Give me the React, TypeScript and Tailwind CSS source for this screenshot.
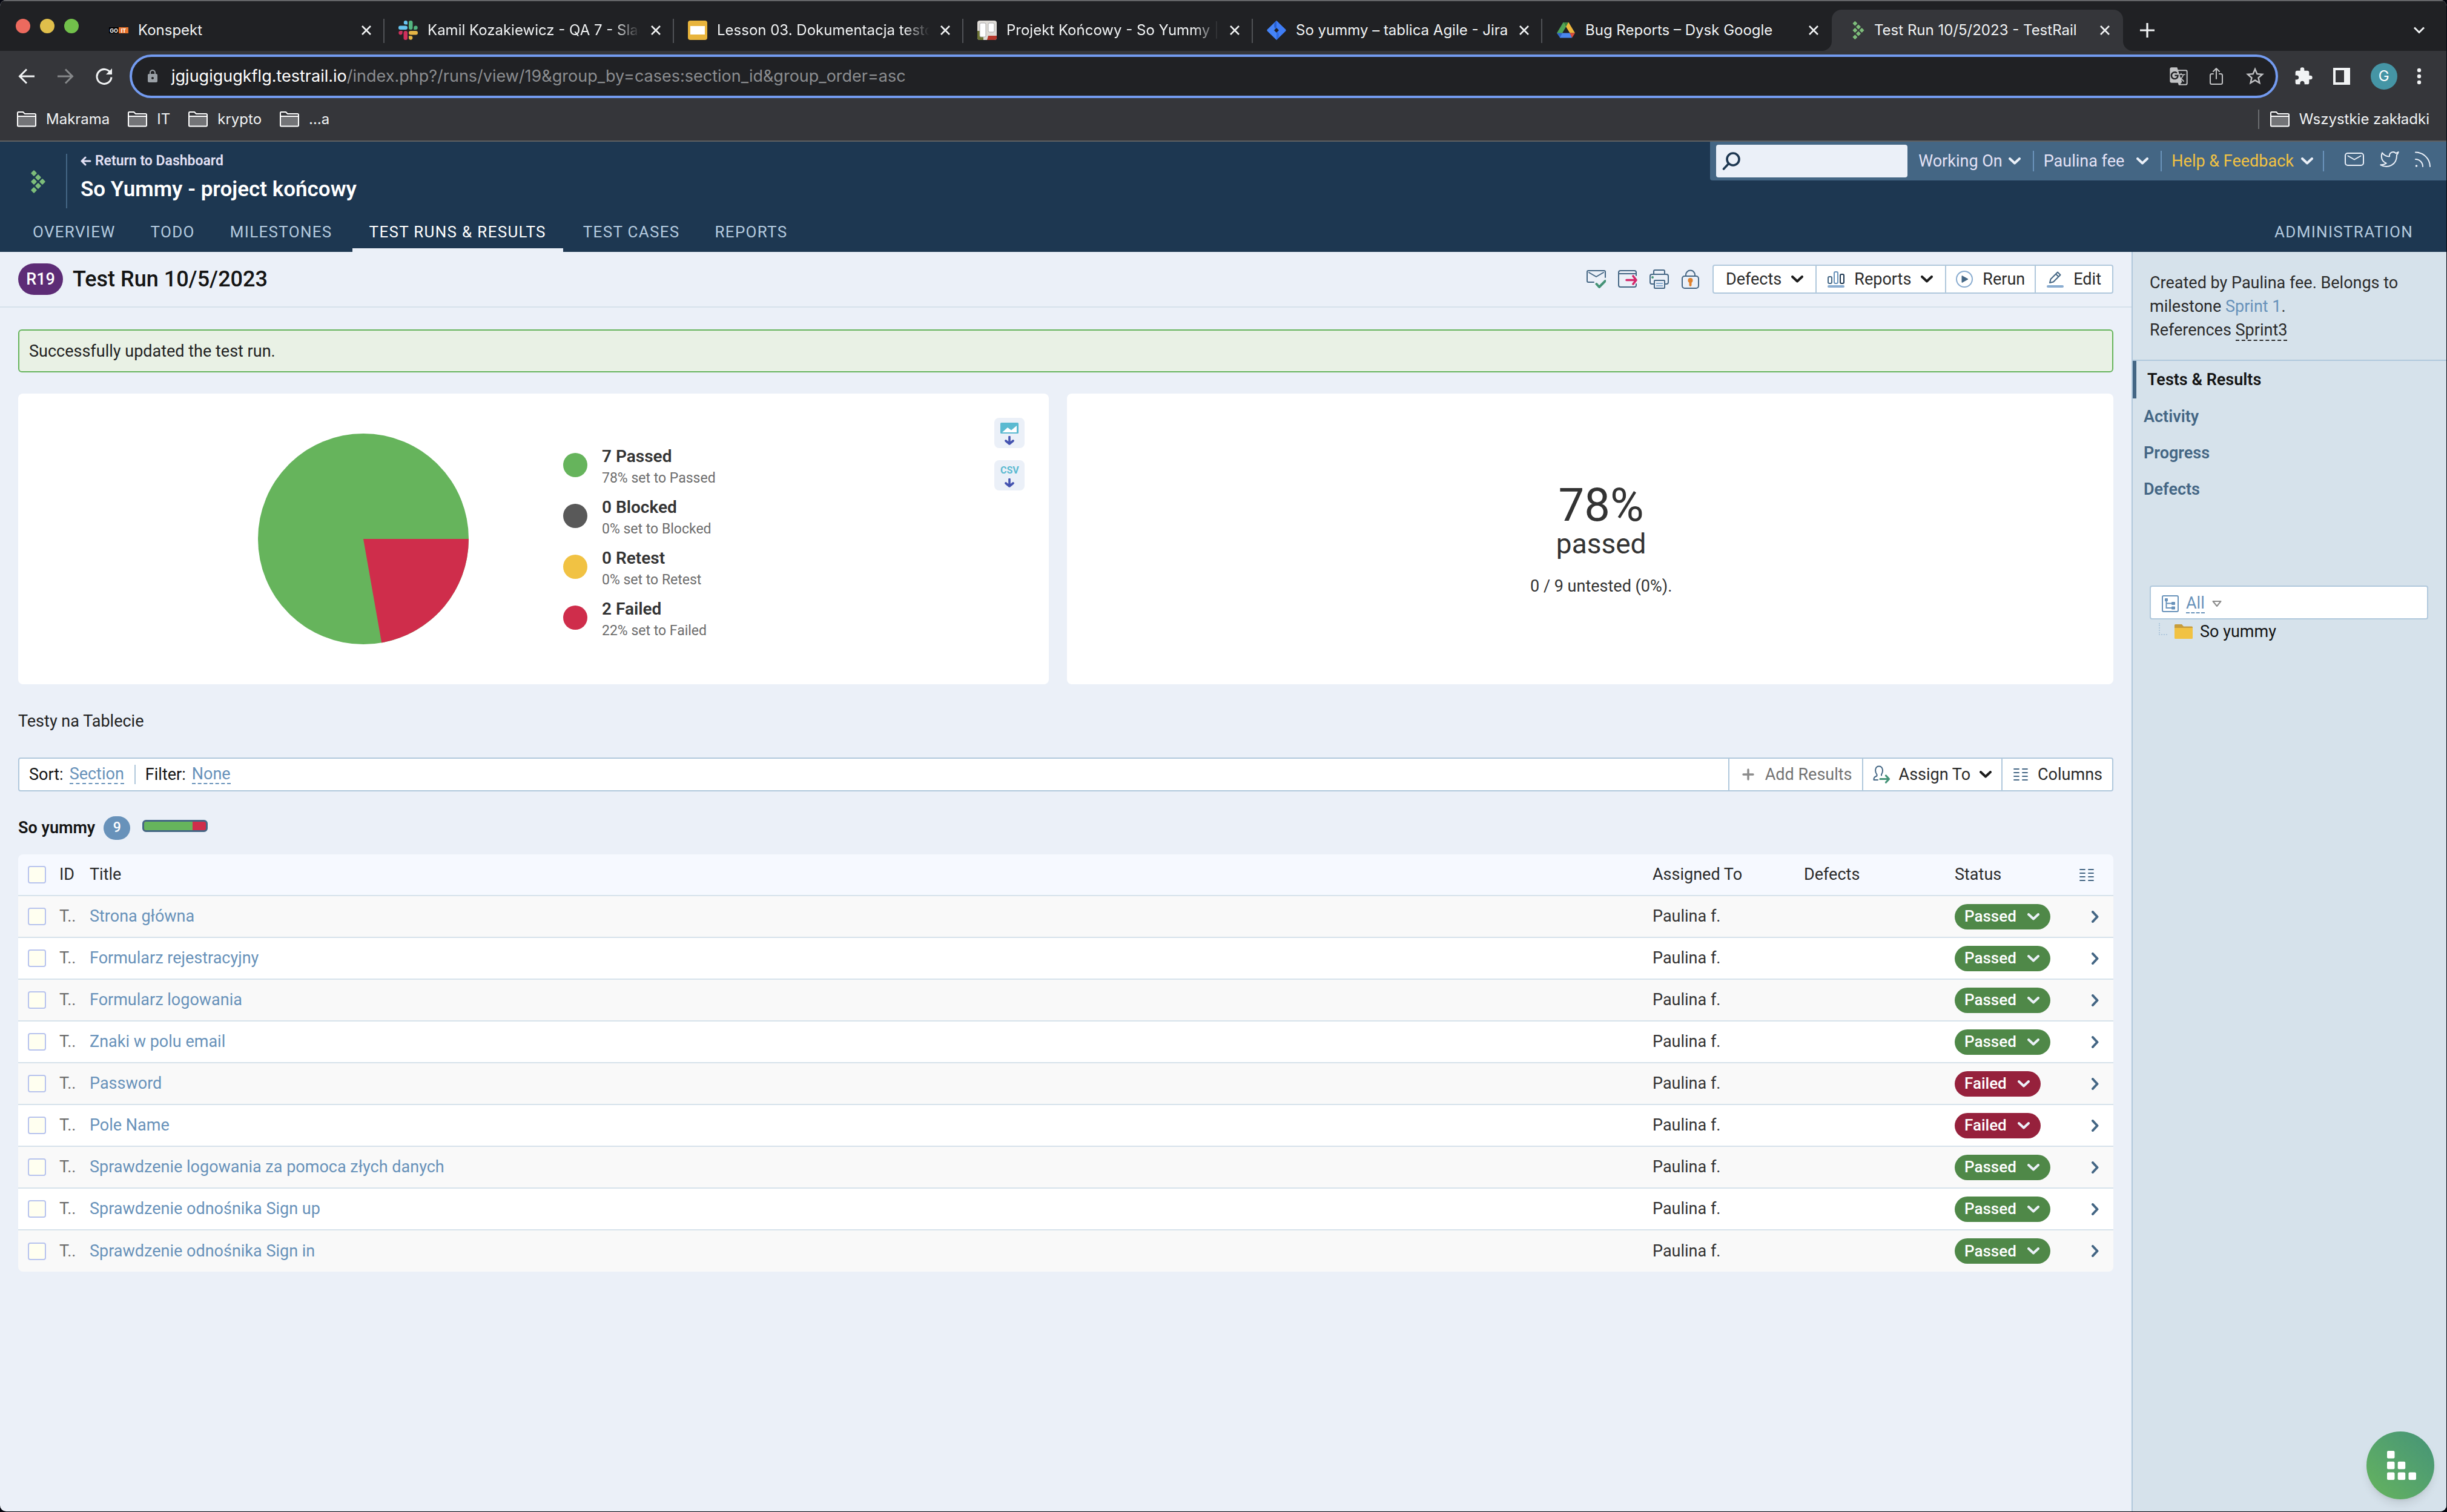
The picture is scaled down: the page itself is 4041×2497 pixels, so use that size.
import React from "react";
import { MdGTranslate, MdExtension, MdLock, MdStarBorder } from "react-icons/md";
import { IoShareOutline } from "react-icons/io5";
import { FiTwitter } from "react-icons/fi";

type Status = "Passed" | "Failed";

const TESTS: { title: string; status: Status }[] = [
  { title: "Strona główna", status: "Passed" },
  { title: "Formularz rejestracyjny", status: "Passed" },
  { title: "Formularz logowania", status: "Passed" },
  { title: "Znaki w polu email", status: "Passed" },
  { title: "Password", status: "Failed" },
  { title: "Pole Name", status: "Failed" },
  { title: "Sprawdzenie logowania za pomoca złych danych", status: "Passed" },
  { title: "Sprawdzenie odnośnika Sign up", status: "Passed" },
  { title: "Sprawdzenie odnośnika Sign in", status: "Passed" },
];

const LEGEND = [
  { label: "7 Passed", note: "78% set to Passed", dot: "bg-[#66b45c]" },
  { label: "0 Blocked", note: "0% set to Blocked", dot: "bg-[#595959]" },
  { label: "0 Retest", note: "0% set to Retest", dot: "bg-[#f1c243]" },
  { label: "2 Failed", note: "22% set to Failed", dot: "bg-[#cf2d4b]" },
];

/* ---------- icons ---------- */

function Chevron({ className = "" }: { className?: string }) {
  return (
    <svg viewBox="0 0 20 12" className={"h-3 w-5 shrink-0 " + className} fill="none" stroke="currentColor" strokeWidth="4" strokeLinecap="round" strokeLinejoin="round">
      <path d="M2 2l8 7.5L18 2" />
    </svg>
  );
}

function TestRailLogo({ className = "" }: { className?: string }) {
  const dots = [[6, 6], [13, 13], [6, 20], [20, 20], [13, 27], [6, 34]];
  return (
    <svg viewBox="0 0 26 40" className={className} fill="#7dbd7a">
      {dots.map(([x, y]) => (
        <rect key={x + "-" + y} x={x - 3.6} y={y - 3.6} width="7.2" height="7.2" rx="1" transform={`rotate(45 ${x} ${y})`} />
      ))}
    </svg>
  );
}

function KonspektIcon() {
  return (
    <span className="flex h-8 w-8 shrink-0 items-center text-[9px] font-bold leading-none text-white">
      <span className="flex h-[10px] w-4 items-center justify-center bg-black">GO</span>
      <span className="flex h-[10px] w-4 items-center justify-center bg-[#e8732c]">IT</span>
    </span>
  );
}

function SlackIcon() {
  return (
    <svg viewBox="0 0 32 32" className="h-8 w-8 shrink-0">
      <g fill="#67c5f0"><rect x="0" y="8.5" width="15" height="6.5" rx="3.2" /><path d="M8.8 3.2a3.1 3.1 0 0 1 6.2 0v3.3h-3.1a3.1 3.1 0 0 1-3.1-3.3z" /></g>
      <g fill="#53b580"><rect x="17" y="0" width="6.5" height="15" rx="3.2" /><path d="M25.3 15v-3.3a3.2 3.2 0 1 1 3.3 3.3z" /></g>
      <g fill="#e5b445"><rect x="17" y="17" width="15" height="6.5" rx="3.2" /><path d="M17 25.3h3.3a3.2 3.2 0 1 1-3.3 3.3z" /></g>
      <g fill="#d0305c"><rect x="8.5" y="17" width="6.5" height="15" rx="3.2" /><path d="M6.7 17v3.3A3.2 3.2 0 1 1 3.4 17z" /></g>
    </svg>
  );
}

function SlidesIcon() {
  return (
    <svg viewBox="0 0 32 32" className="h-8 w-8 shrink-0"><rect width="32" height="32" rx="4" fill="#e8b43c" /><rect x="4" y="9" width="24" height="14" fill="#fff" /></svg>
  );
}

function TrelloIcon() {
  return (
    <svg viewBox="0 0 32 32" className="h-8 w-8 shrink-0">
      <rect width="32" height="32" rx="4" fill="#dedbd6" />
      <path d="M0 17h10v15H4a4 4 0 0 1-4-4z" fill="#6d7434" />
      <path d="M18 25h14v3a4 4 0 0 1-4 4H16z" fill="#b5382c" />
      <rect x="4" y="4" width="10" height="23" rx="2" fill="#fff" stroke="#aaa" />
      <rect x="18" y="4" width="10" height="15" rx="2" fill="#fff" stroke="#aaa" />
    </svg>
  );
}

function JiraIcon() {
  return (
    <svg viewBox="0 0 32 32" className="h-8 w-8 shrink-0">
      <path d="M16 0L31 14.6a2 2 0 0 1 0 2.8L16 32v-12l4-4-4-4z" fill="#3f7df6" />
      <path d="M16 0L1 14.6a2 2 0 0 0 0 2.8L16 32v-12l-4-4 4-4z" fill="#4584f7" />
      <path d="M16 12V0c-5 5-5 9-2 14z" fill="#2760d3" />
      <path d="M16 20v12c5-5 5-9 2-14z" fill="#2f6be0" />
    </svg>
  );
}

function DriveIcon() {
  return (
    <svg viewBox="0 0 32 32" className="h-8 w-8 shrink-0">
      <path d="M11.5 3h9L6.5 28.5 1 20.5z" fill="#4fa457" />
      <path d="M20.5 3L31 20.5h-8.6L13 5.5 14 3z" fill="#efb73d" />
      <path d="M12 3h8l-4 7.5z" fill="#38833f" />
      <path d="M16 10.5l6 10H10z" fill="#202124" />
      <path d="M1 20.5h9L6.5 28.5z" fill="#2f62cf" />
      <path d="M22 20.5h9l-5 8z" fill="#dc4b3c" />
      <path d="M10.2 20.5h12l3.8 8H6z" fill="#4a86ee" />
    </svg>
  );
}

function CloseIcon() {
  return (
    <svg viewBox="0 0 16 16" className="h-4 w-4" stroke="currentColor" strokeWidth="2.6"><path d="M1 1l14 14M15 1L1 15" /></svg>
  );
}

function FolderOutline() {
  return (
    <svg viewBox="0 0 32 26" className="h-[26px] w-8 shrink-0" fill="none" stroke="#fff" strokeWidth="2">
      <path d="M1 8h30v15a1.500 1.500 0 0 1-1.500 1.500h-27A1.500 1.500 0 0 1 1 23z" fill="#737477" />
      <path d="M1 8V2.500a1.500 1.500 0 0 1 1.500-1.500H10l3 3h16.500A1.500 1.500 0 0 1 31 5.500V8" />
    </svg>
  );
}

function ColumnsIcon() {
  return (
    <svg viewBox="0 0 24 20" className="h-5 w-6 shrink-0" stroke="#446684" strokeWidth="1.8" strokeLinecap="round">
      <path d="M1 1h8M15 1h8M1 7h8M15 7h8M1 13h8M15 13h8M1 19h8M15 19h8" />
    </svg>
  );
}

/* ---------- browser chrome ---------- */

function Tab({ icon, title, active = false, fade = false, divider = true }: { icon: React.ReactNode; title: string; active?: boolean; fade?: boolean; divider?: boolean }) {
  return (
    <div
      className={
        active
          ? "relative flex h-[68px] min-w-0 basis-[481px] items-center bg-[#35363a] pl-7 pr-[22px] rounded-t-2xl"
          : "relative flex h-[68px] min-w-0 basis-[478px] items-center pl-[23px] pr-[22px]"
      }
    >
      {icon}
      <span
        className={
          (active ? "ml-2.5" : "ml-4") +
          " min-w-0 flex-1 overflow-hidden whitespace-nowrap" +
          (fade ? " [mask-image:linear-gradient(to_right,black_88%,transparent)]" : "")
        }
      >
        {title}
      </span>
      <button aria-label={"Close " + title} className={fade ? "ml-[18px]" : "ml-2"}><CloseIcon /></button>
      {divider && <span className="absolute right-0 top-[15px] h-10 w-0.5 bg-[#505256]" />}
      {active && (
        <>
          <svg viewBox="0 0 16 16" className="absolute -left-4 bottom-0 h-4 w-4" fill="#35363a"><path d="M16 0v16H0A16 16 0 0 0 16 0z" /></svg>
          <svg viewBox="0 0 16 16" className="absolute -right-4 bottom-0 h-4 w-4" fill="#35363a"><path d="M0 0v16h16A16 16 0 0 1 0 0z" /></svg>
        </>
      )}
    </div>
  );
}

function Bookmark({ label }: { label: string }) {
  return (
    <a href="#" className="flex items-center gap-4">
      <FolderOutline />
      {label}
    </a>
  );
}

function BrowserChrome() {
  return (
    <div className="font-['Inter',sans-serif] text-2xl text-[#f1f3f4]">
      <div className="flex h-[84px] items-end border-t-2 border-[#646568] bg-[#202124]">
        <div className="flex h-[68px] w-[157px] shrink-0 items-center gap-4 pb-3.5 pl-[26px]">
          <span className="h-6 w-6 rounded-full bg-[#ec6a5e]" />
          <span className="h-6 w-6 rounded-full bg-[#e0bf4b]" />
          <span className="h-6 w-6 rounded-full bg-[#72c14b]" />
        </div>
        <Tab icon={<KonspektIcon />} title="Konspekt" />
        <Tab icon={<SlackIcon />} title="Kamil Kozakiewicz - QA 7 - Slac" fade />
        <Tab icon={<SlidesIcon />} title="Lesson 03. Dokumentacja testo" fade />
        <Tab icon={<TrelloIcon />} title="Projekt Końcowy - So Yummy |" fade />
        <Tab icon={<JiraIcon />} title="So yummy – tablica Agile - Jira" />
        <Tab icon={<DriveIcon />} title="Bug Reports – Dysk Google" divider={false} />
        <Tab icon={<TestRailLogo className="h-8 w-8 shrink-0" />} title="Test Run 10/5/2023 - TestRail" active divider={false} />
        <div className="flex h-[68px] flex-1 items-center justify-between pl-7 pr-9">
          <button aria-label="New tab">
            <svg viewBox="0 0 24 24" className="h-6 w-6" stroke="currentColor" strokeWidth="3.2"><path d="M12 0v24M0 12h24" /></svg>
          </button>
          <button aria-label="Search tabs">
            <svg viewBox="0 0 18 12" className="h-3 w-[18px]" fill="none" stroke="currentColor" strokeWidth="3"><path d="M1 1.500l8 8 8-8" /></svg>
          </button>
        </div>
      </div>

      <div className="border-b-2 border-[#5f6062] bg-[#35363a]">
        <div className="flex items-center pt-1.5">
          <div className="flex w-[214px] shrink-0 items-center gap-9 pl-[30px]">
            <button aria-label="Back">
              <svg viewBox="0 0 28 26" className="h-[26px] w-7" fill="none" stroke="currentColor" strokeWidth="3"><path d="M27 13H3M14 1.500L2.500 13 14 24.500" /></svg>
            </button>
            <button aria-label="Forward" className="text-[#86888a]">
              <svg viewBox="0 0 28 26" className="h-[26px] w-7" fill="none" stroke="currentColor" strokeWidth="3"><path d="M1 13h24M14 1.500L25.500 13 14 24.500" /></svg>
            </button>
            <button aria-label="Reload">
              <svg viewBox="0 0 28 28" className="h-7 w-7" fill="none" stroke="currentColor" strokeWidth="3"><path d="M25 9.500A12 12 0 1 0 26 15.500" /><path d="M27 1v10H17z" fill="currentColor" stroke="none" /></svg>
            </button>
          </div>
          <div className="flex h-[72px] flex-1 items-center rounded-full border-4 border-[#739bf0] bg-[#202124] pl-[22px] pr-4">
            <MdLock className="mr-[19px] h-6 w-6 text-[#9aa0a6]" />
            <p className="flex-1 whitespace-nowrap text-[27px] text-[#8b8d90]">
              <span className="text-white">jgjugigugkflg.testrail.io</span>/index.php?/runs/view/19&amp;group_by=cases:section_id&amp;group_order=asc
            </p>
            <div className="flex items-center gap-[30px] text-[#c1c2c4]">
              <button aria-label="Translate"><MdGTranslate className="h-8 w-8" /></button>
              <button aria-label="Share"><IoShareOutline className="h-8 w-8" /></button>
              <button aria-label="Bookmark this tab"><MdStarBorder className="h-9 w-9" /></button>
            </div>
          </div>
          <div className="flex w-[278px] shrink-0 items-center justify-between pl-[26px] pr-[42px]">
            <button aria-label="Extensions"><MdExtension className="h-8 w-8" /></button>
            <button aria-label="Side panel">
              <svg viewBox="0 0 28 28" className="h-7 w-7"><path fill="currentColor" fillRule="evenodd" d="M0 0h28v28H0zM4 4v20h14V4z" /></svg>
            </button>
            <button aria-label="Profile" className="h-11 w-11 rounded-full bg-[#4595a5] text-white">G</button>
            <button aria-label="Menu">
              <svg viewBox="0 0 6 26" className="h-[26px] w-1.5 overflow-visible" fill="currentColor"><circle cx="3" cy="3" r="3.200" /><circle cx="3" cy="13" r="3.200" /><circle cx="3" cy="23" r="3.200" /></svg>
            </button>
          </div>
        </div>
        <div className="flex h-[70px] items-center gap-[30px] pl-7 pr-7">
          <Bookmark label="Makrama" />
          <Bookmark label="IT" />
          <Bookmark label="krypto" />
          <Bookmark label="…a" />
          <div className="ml-auto flex items-center gap-[18px]">
            <span className="h-8 w-0.5 bg-[#6b6d70]" />
            <Bookmark label="Wszystkie zakładki" />
          </div>
        </div>
      </div>
    </div>
  );
}

/* ---------- TestRail header ---------- */

const NAV = ["OVERVIEW", "TODO", "MILESTONES", "TEST RUNS & RESULTS", "TEST CASES", "REPORTS"];

function AppHeader() {
  return (
    <header className="bg-[#1d3751]">
      <div className="flex h-32 justify-between">
        <div className="flex items-start">
          <TestRailLogo className="ml-[50px] mt-[46px] h-10 w-[26px]" />
          <div className="ml-[33px] mt-5 h-[90px] w-0.5 bg-[#446684]" />
          <div className="ml-[22px] mt-[17px] text-white">
            <a href="#" className="flex items-center gap-1.5 text-[23px] font-semibold leading-[30px] text-[#e3e1f5]">
              <svg viewBox="0 0 18 16" className="h-4 w-[18px]" fill="none" stroke="currentColor" strokeWidth="3" strokeLinecap="round" strokeLinejoin="round"><path d="M16 8H2.500M8 2L2 8l6 6" /></svg>
              Return to Dashboard
            </a>
            <h1 className="mt-2 text-[35px] font-semibold leading-[48px]">So Yummy - project końcowy</h1>
          </div>
        </div>
        <div className="flex h-16 items-center rounded-bl bg-[#446684] pl-2.5 pr-[26px] text-[#e3e1f5]">
          <label className="flex h-[54px] w-[316px] items-center rounded bg-[#ebf0f8] pl-2.5">
            <svg viewBox="0 0 30 30" className="h-[30px] w-[30px]" fill="none" stroke="#1d3751" strokeWidth="3.600" strokeLinecap="round"><circle cx="18" cy="12" r="10" /><path d="M10 20l-7.500 8" /></svg>
            <input aria-label="Search" className="min-w-0 flex-1 bg-transparent px-2 text-[#1d3751] outline-none" />
          </label>
          <button className="ml-[18px] flex items-center gap-2.5">Working On <Chevron className="text-[#ebf0f8]" /></button>
          <span className="ml-5 h-[34px] w-0.5 bg-[#6a93bb]" />
          <button className="ml-4 flex items-center gap-5">Paulina fee <Chevron className="text-[#ebf0f8]" /></button>
          <span className="ml-5 h-[34px] w-0.5 bg-[#6a93bb]" />
          <button className="ml-4 flex items-center gap-3 text-[#f1c243]">Help &amp; Feedback <Chevron className="text-[#ebf0f8]" /></button>
          <span className="ml-4 h-[34px] w-0.5 bg-[#6a93bb]" />
          <div className="ml-[34px] flex items-center gap-[26px] pb-1.5 text-[#ebf0f8]">
            <a href="#" aria-label="Messages">
              <svg viewBox="0 0 32 22" className="h-[22px] w-8" fill="none" stroke="currentColor" strokeWidth="2" strokeLinecap="round" strokeLinejoin="round"><rect x="1" y="1" width="30" height="20" rx="4" /><path d="M5.500 5.500L16 11.500l10.500-6" /></svg>
            </a>
            <a href="#" aria-label="Twitter"><FiTwitter className="h-8 w-8 stroke-[1.5]" /></a>
            <a href="#" aria-label="RSS feed">
              <svg viewBox="0 0 26 26" className="h-[26px] w-[26px]" fill="none" stroke="currentColor" strokeWidth="2" strokeLinecap="round"><path d="M1 1.500A24 24 0 0 1 25 25M1 13a12 12 0 0 1 12 12" /><circle cx="2.500" cy="24" r="1.800" fill="currentColor" stroke="none" /></svg>
            </a>
          </div>
        </div>
      </div>
      <nav className="flex h-[54px] gap-2 pl-[29px] pr-[30px] text-[26px] tracking-wider">
        {NAV.map((item) => (
          <a
            key={item}
            href="#"
            className={
              item === "TEST RUNS & RESULTS"
                ? "border-b-[6px] border-[#ebf0f8] px-7 leading-[42px] text-white"
                : "px-[25px] leading-[42px] text-[#b4cadf]"
            }
          >
            {item}
          </a>
        ))}
        <a href="#" className="ml-auto px-[25px] leading-[42px] text-[#b4cadf]">ADMINISTRATION</a>
      </nav>
    </header>
  );
}

/* ---------- run page ---------- */

function TitleBar() {
  return (
    <div className="flex h-[92px] items-center border-b-2 border-[#d6e2eb] px-[30px]">
      <span className="flex h-[52px] w-[74px] items-center justify-center rounded-full bg-[#5d2c76] text-[27px] font-medium text-white">R19</span>
      <h2 className="ml-4 text-4xl font-medium text-[#141414]">Test Run 10/5/2023</h2>
      <div className="ml-auto flex items-center gap-5">
        <button aria-label="Subscribe">
          <svg viewBox="0 0 32 32" className="h-8 w-8" fill="none" strokeWidth="2" strokeLinecap="round" strokeLinejoin="round">
            <path d="M12 21H3a2 2 0 0 1-2-2V4a2 2 0 0 1 2-2h26a2 2 0 0 1 2 2v9" stroke="#446684" /><path d="M4 5l12 7 12-7" stroke="#446684" />
            <path d="M16.500 24l4.500 5 10-10" stroke="#459377" strokeWidth="4" />
          </svg>
        </button>
        <button aria-label="Export">
          <svg viewBox="0 0 32 32" className="h-8 w-8" fill="none" strokeWidth="2" strokeLinecap="round" strokeLinejoin="round">
            <path d="M30 10V5a3 3 0 0 0-3-3H4a3 3 0 0 0-3 3v21a3 3 0 0 0 3 3h23a3 3 0 0 0 3-3v-2M1 7h28" stroke="#446684" />
            <path d="M14 17.500h15M25 11l5 6.500-5 6.500" stroke="#d4286b" strokeWidth="3.600" />
          </svg>
        </button>
        <button aria-label="Print">
          <svg viewBox="0 0 32 32" className="h-8 w-8" fill="none" stroke="#446684" strokeWidth="2" strokeLinejoin="round">
            <path d="M7 8V3a2 2 0 0 1 2-2h14a2 2 0 0 1 2 2v5" /><path d="M7 24H4a3 3 0 0 1-3-3V11a3 3 0 0 1 3-3h24a3 3 0 0 1 3 3v10a3 3 0 0 1-3 3h-3" />
            <rect x="8" y="18" width="17" height="13" rx="1" /><path d="M11 23h11M11 27h11" stroke="#89acd0" /><circle cx="5" cy="13" r="2" fill="#459377" stroke="none" />
          </svg>
        </button>
        <button aria-label="Close run">
          <svg viewBox="0 0 32 32" className="h-8 w-8" fill="none" stroke="#446684" strokeWidth="2">
            <rect x="2" y="11" width="27" height="20" rx="4" /><path d="M8 11V9a7.500 7.500 0 0 1 15 0v2" /><circle cx="15.500" cy="18" r="4" fill="#df812d" stroke="none" /><path d="M15.500 18v8" stroke="#df812d" strokeWidth="4" strokeLinecap="round" />
          </svg>
        </button>
        <div className="flex h-12 divide-x-2 divide-[#b0c8dc] rounded border-2 border-[#b0c8dc] bg-white text-[#2b2b2b]">
          <button className="flex items-center gap-4 px-5">Defects <Chevron className="text-[#1c1c1c]" /></button>
          <button className="flex items-center gap-4 pl-[18px] pr-5">
            <svg viewBox="0 0 28 28" className="h-7 w-7" fill="none" strokeWidth="2">
              <rect x="1" y="10" width="6" height="11" rx="2" stroke="#446684" /><rect x="11" y="2" width="6" height="19" rx="2" stroke="#6892ba" /><rect x="21" y="6" width="6" height="15" rx="2" stroke="#1d3751" /><rect y="24" width="28" height="4" rx="2" fill="#89acd0" />
            </svg>
            Reports <Chevron className="text-[#1c1c1c]" />
          </button>
          <button className="flex items-center gap-4 px-4">
            <svg viewBox="0 0 28 28" className="h-7 w-7"><circle cx="14" cy="14" r="13" fill="none" stroke="#89acd0" strokeWidth="2" /><path d="M10 8.500v11l10-5.500z" fill="#446684" stroke="#446684" strokeLinejoin="round" /></svg>
            Rerun
          </button>
          <button className="flex items-center gap-4 px-[18px]">
            <svg viewBox="0 0 28 28" className="h-7 w-7" fill="none" stroke="#446684" strokeWidth="2" strokeLinejoin="round"><path d="M5 20l1.500-6L18 2.500l4.500 4.500L11 18.500z M15 5.500l4.500 4.500" /><rect y="24" width="28" height="4" rx="2" fill="#89acd0" stroke="none" /></svg>
            Edit
          </button>
        </div>
      </div>
    </div>
  );
}

function DownloadButton({ label, children }: { label: string; children: React.ReactNode }) {
  return (
    <button aria-label={label} className="flex h-[50px] w-[50px] flex-col items-center gap-1 rounded-lg bg-[#ebf0f8] pt-2">
      <span className="flex h-[18px] items-center">{children}</span>
      <svg viewBox="0 0 18 15" className="h-[15px] w-[18px]" fill="none" stroke="#4453b0" strokeWidth="3.600" strokeLinecap="round" strokeLinejoin="round"><path d="M9 1.500V13M3 8l6 5 6-5" /></svg>
    </button>
  );
}

function Summary() {
  return (
    <div className="mt-[35px] flex h-[480px] gap-[30px]">
      <section className="flex flex-[170] justify-between rounded-lg bg-white pr-10">
        <div className="flex items-center">
          <svg viewBox="0 0 348 348" className="ml-[396px] h-[348px] w-[348px]">
            <circle cx="174" cy="174" r="174" fill="#66b45c" />
            <path d="M174 174H348A174 174 0 0 1 204.200 345.400z" fill="#cf2d4b" />
          </svg>
          <ul className="ml-[156px] mt-2">
            {LEGEND.map((l) => (
              <li key={l.label} className="flex h-[84px] items-center gap-6">
                <span className={"h-10 w-10 rounded-full " + l.dot} />
                <div className="pt-2">
                  <p className="text-[28px] font-semibold leading-9 text-[#333]">{l.label}</p>
                  <p className="text-[23px] leading-9 text-[#6d6d6d]">{l.note}</p>
                </div>
              </li>
            ))}
          </ul>
        </div>
        <div className="mt-10 flex flex-col gap-5">
          <DownloadButton label="Download image">
            <svg viewBox="0 0 30 18" className="h-[18px] w-[30px]"><rect width="30" height="18" rx="1.500" fill="#5bbad1" /><path d="M3 16l9-8 6 4.500L27 5v11z" fill="#fff" /></svg>
          </DownloadButton>
          <DownloadButton label="Download CSV">
            <span className="text-base font-bold leading-none text-[#5bbad1]">CSV</span>
          </DownloadButton>
        </div>
      </section>
      <section className="flex flex-[173] flex-col items-center rounded-lg bg-white pl-9 pt-[142px] text-[#333]">
        <p className="text-[76px] leading-[84px]">78%</p>
        <p className="text-[46px] leading-[44px]">passed</p>
        <p className="mt-[26px] leading-[44px]">0 / 9 untested (0%).</p>
      </section>
    </div>
  );
}

function FilterBar() {
  return (
    <div className="mt-10 flex h-14 justify-between rounded border-2 border-[#b0c8dc] bg-white">
      <div className="flex items-center pl-4 text-[#141414]">
        Sort:
        <a href="#" className="ml-2.5 border-b-2 border-dashed border-[#6892ba] leading-[30px] text-[#6892ba]">Section</a>
        <span className="ml-[17px] h-8 w-0.5 bg-[#b0c8dc]" />
        <span className="ml-4">Filter:</span>
        <a href="#" className="ml-2.5 border-b-2 border-dashed border-[#6892ba] leading-[30px] text-[#6892ba]">None</a>
      </div>
      <div className="flex divide-x-2 divide-[#b0c8dc] border-l-2 border-[#b0c8dc] text-[#2b2b2b]">
        <button className="flex items-center gap-[18px] pl-[21px] pr-4 text-[#737373]">
          <svg viewBox="0 0 20 20" className="h-5 w-5" stroke="#8c8c8c" strokeWidth="3.400" strokeLinecap="round"><path d="M10 2v16M2 10h16" /></svg>
          Add Results
        </button>
        <button className="flex items-center gap-[15px] px-4">
          <svg viewBox="0 0 28 30" className="h-[30px] w-7" fill="none" strokeWidth="2" strokeLinecap="round" strokeLinejoin="round">
            <path d="M8 24H1.500c-.500-4 1.500-5.500 5-6.500V15C2.500 10 3.500 1.500 10 1.500S17.500 10 14 15v1.500" stroke="#446684" />
            <path d="M12 22.500h13M21.500 17l5 5.500-5 5.500" stroke="#459377" strokeWidth="3.200" />
          </svg>
          Assign To <Chevron className="text-[#1c1c1c]" />
        </button>
        <button className="flex items-center gap-4 pl-[18px] pr-4"><ColumnsIcon />Columns</button>
      </div>
    </div>
  );
}

function TestCheckbox({ label }: { label: string }) {
  return <input type="checkbox" aria-label={label} className="ml-4 block h-[29px] w-[30px] appearance-none rounded border-2 border-[#b7c3ee] bg-[#fffff0]" />;
}

function StatusPill({ status }: { status: Status }) {
  return (
    <button className={"flex h-[42px] items-center gap-[18px] rounded-full pl-4 pr-[18px] text-[26px] font-medium text-white " + (status === "Passed" ? "bg-[#4f8848]" : "bg-[#96213c]")}>
      {status} <Chevron className="text-[#ebf0f8]" />
    </button>
  );
}

function TestTable() {
  return (
    <table className="w-full table-fixed overflow-hidden rounded-lg text-left">
      <colgroup>
        <col className="w-[68px]" />
        <col className="w-[50px]" />
        <col />
        <col className="w-[250px]" />
        <col className="w-[249px]" />
        <col className="w-[202px]" />
        <col className="w-[60px]" />
      </colgroup>
      <thead>
        <tr className="h-[68px] border-b-2 border-[#d6e2eb] bg-[#f6f9ff] text-[#2b2b2b] [&>th]:font-normal">
          <th><TestCheckbox label="Select all tests" /></th>
          <th>ID</th>
          <th>Title</th>
          <th>Assigned To</th>
          <th>Defects</th>
          <th>Status</th>
          <th><button aria-label="Choose columns" className="block pl-1"><ColumnsIcon /></button></th>
        </tr>
      </thead>
      <tbody>
        {TESTS.map((t) => (
          <tr key={t.title} className="h-[69px] border-b-2 border-[#d6e2eb] bg-white text-[#333] last:border-b-0 odd:bg-[#f9f9f9]">
            <td><TestCheckbox label={"Select " + t.title} /></td>
            <td className="text-[#6d6d6d]">T..</td>
            <td><a href="#" className="text-[#6892ba]">{t.title}</a></td>
            <td>Paulina f.</td>
            <td />
            <td><StatusPill status={t.status} /></td>
            <td>
              <button aria-label={"Open " + t.title} className="ml-6 block">
                <svg viewBox="0 0 12 20" className="h-5 w-3" fill="none" stroke="#446684" strokeWidth="4" strokeLinecap="round" strokeLinejoin="round"><path d="M2 2l7.500 8L2 18" /></svg>
              </button>
            </td>
          </tr>
        ))}
      </tbody>
    </table>
  );
}

function Sidebar() {
  return (
    <aside className="flex w-[520px] shrink-0 flex-col border-l-2 border-[#b0c8dc] bg-[#d6e2eb] text-[#2b2b2b]">
      <div className="border-b-2 border-[#b0c8dc] px-7 pb-[29px] pt-8 leading-[39px]">
        <p>
          Created by Paulina fee. Belongs to<br />milestone <a href="#" className="text-[#6892ba]">Sprint 1</a>.
        </p>
        <p>References <a href="#" className="border-b-2 border-dashed border-[#2b2b2b]">Sprint3</a></p>
      </div>
      <nav className="flex flex-col font-semibold text-[#446684]">
        <a href="#" className="border-l-[6px] border-[#446684] pl-[18px] leading-[62px] text-[#141414]">Tests &amp; Results</a>
        <a href="#" className="pl-[18px] leading-[60px]">Activity</a>
        <a href="#" className="pl-[18px] leading-[60px]">Progress</a>
        <a href="#" className="pl-[18px] leading-[60px]">Defects</a>
      </nav>
      <div className="ml-7 mr-[30px] mt-[129px] flex h-14 items-center rounded border-2 border-[#b0c8dc] bg-white pl-[18px] pt-1">
        <svg viewBox="0 0 28 28" className="h-7 w-7" fill="none" stroke="#6892ba" strokeWidth="2">
          <rect x="1" y="1" width="26" height="26" rx="2" /><path d="M7.500 8v13h9M7.500 13.500h9" />
          <g fill="#6892ba" stroke="none"><rect x="5" y="5" width="5" height="5" rx="1" /><rect x="16" y="11" width="6" height="5" rx="1" /><rect x="16" y="18.500" width="6" height="5" rx="1" /></g>
        </svg>
        <a href="#" className="ml-3 border-b-2 border-dashed border-[#6892ba] leading-[30px] text-[#6892ba]">All</a>
        <svg viewBox="0 0 16 10" className="ml-3 h-2.5 w-4" fill="none" stroke="#8c8c8c" strokeWidth="2" strokeLinejoin="round"><path d="M1.500 1h13L8 9z" /></svg>
      </div>
      <div className="ml-[43px] flex h-10 items-center text-[#141414]">
        <span className="mb-2 h-5 w-3.5 border-b-2 border-l-2 border-dotted border-[#b0c8dc]" />
        <svg viewBox="0 0 30 24" className="ml-3 h-6 w-[30px]"><path d="M0 1.500A1.500 1.500 0 0 1 1.500 0H12l3 3.500h13.500A1.500 1.500 0 0 1 30 5v5H0z" fill="#c79d3c" /><path d="M0 6h30v16.500a1.500 1.500 0 0 1-1.500 1.500h-27A1.500 1.500 0 0 1 0 22.500z" fill="#f1c243" /></svg>
        <a href="#" className="ml-3">So yummy</a>
      </div>
    </aside>
  );
}

export default function App() {
  return (
    <div className="flex min-h-screen bg-[#05060f] pb-px pr-px">
      <div className="relative flex min-w-0 flex-1 flex-col overflow-hidden rounded-[10px] bg-[#ebf0f8] font-['Roboto',sans-serif] text-[27px]">
        <BrowserChrome />
        <AppHeader />
        <div className="flex flex-1">
          <main className="min-w-0 flex-1">
            <TitleBar />
            <div className="px-[30px] pt-9">
              <p role="status" className="flex h-[71px] items-center rounded-md border-2 border-[#66b45c] bg-[#e9f1e5] px-4 pt-0.5 text-[#222]">
                Successfully updated the test run.
              </p>
              <Summary />
              <p className="mt-[41px] leading-10 text-[#222]">Testy na Tablecie</p>
              <FilterBar />
              <div className="flex h-[104px] items-center pt-4">
                <h3 className="text-[27px] font-semibold text-[#141414]">So yummy</h3>
                <span className="ml-3.5 flex h-[39px] w-11 items-center justify-center rounded-full bg-[#6892ba] text-[23px] font-medium text-white">9</span>
                <span className="mb-1.5 ml-5 flex h-5 w-[108px] overflow-hidden rounded-md border-[3px] border-[#446684] bg-[#cf2d4b]">
                  <span className="w-[78%] bg-[#66b45c]" />
                </span>
              </div>
              <TestTable />
            </div>
          </main>
          <Sidebar />
        </div>
        <button aria-label="Help center" className="absolute bottom-5 right-5 flex h-28 w-28 items-center justify-center rounded-full bg-linear-to-tr from-[#66b45c] to-[#459377] shadow-lg">
          <svg viewBox="0 0 48 48" className="ml-1 h-12 w-12" fill="#fff">
            <rect width="12.500" height="12.500" rx="2" /><rect y="17.700" width="12.500" height="12.500" rx="2" /><rect x="17.700" y="17.700" width="12.500" height="12.500" rx="2" />
            <rect y="35.500" width="12.500" height="12.500" rx="2" /><rect x="17.700" y="35.500" width="12.500" height="12.500" rx="2" /><rect x="35.500" y="35.500" width="12.500" height="12.500" rx="2" />
          </svg>
        </button>
      </div>
    </div>
  );
}
